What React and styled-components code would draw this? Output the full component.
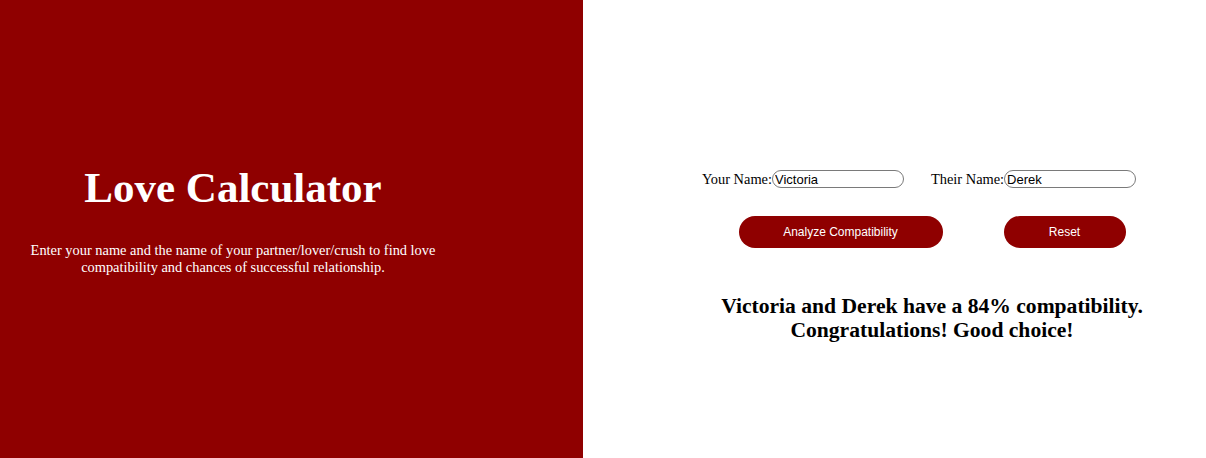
import React from 'react';
import styled, { createGlobalStyle } from 'styled-components';

const GlobalStyle = createGlobalStyle`
  body {
    margin: 0;
    font-family: "Liberation Serif", "Times New Roman", serif;
  }
`;

const App = () => {
    return (
        <>
            <GlobalStyle />
            <Page>
                <Intro>
                    <IntroInner>
                        <Title>Love Calculator</Title>
                        <Lead>
                            Enter your name and the name of your partner/lover/crush to find love
                            compatibility and chances of successful relationship.
                        </Lead>
                    </IntroInner>
                </Intro>
                <Calc>
                    <FormRow>
                        <Field>
                            <label htmlFor="you">Your Name:</label>
                            <NameInput id="you" defaultValue="Victoria" />
                        </Field>
                        <Field>
                            <label htmlFor="them">Their Name:</label>
                            <NameInput id="them" defaultValue="Derek" />
                        </Field>
                    </FormRow>
                    <ButtonRow>
                        <Button $w={204}>Analyze Compatibility</Button>
                        <Button $w={122}>Reset</Button>
                    </ButtonRow>
                    <Result>
                        Victoria and Derek have a 84% compatibility.
                        <br />
                        Congratulations! Good choice!
                    </Result>
                </Calc>
            </Page>
        </>
    );
};

export default App;

const Page = styled.div`
  width: 100%;
  height: 458px;
  display: flex;
`;

const Intro = styled.div`
  width: 583px;
  flex-shrink: 0;
  height: 100%;
  background-color: #8f0000;
  color: white;
  display: flex;
  align-items: center;
`;

const IntroInner = styled.div`
  width: 466px;
  text-align: center;
  margin-top: -20px;
`;

const Title = styled.h1`
  font-size: 43px;
  font-weight: bold;
  margin: 0 0 30px 0;
`;

const Lead = styled.p`
  font-size: 14.4px;
  line-height: 17px;
  margin: 0;
`;

const Calc = styled.div`
  flex: 1;
  display: flex;
  flex-direction: column;
  align-items: center;
  padding-top: 170px;
  padding-left: 75px;
`;

const FormRow = styled.div`
  display: flex;
  gap: 27px;
  margin-left: -26px;
  font-size: 14.4px;
`;

const Field = styled.div`
  display: flex;
  align-items: center;
`;

const NameInput = styled.input`
  width: 132px;
  height: 18px;
  box-sizing: border-box;
  border: 1px solid #7a7a7a;
  border-radius: 9px;
  padding: 0 2px;
  font-family: "Liberation Sans", Arial, sans-serif;
  font-size: 13px;
  color: black;
  outline: none;
`;

const ButtonRow = styled.div`
  display: flex;
  gap: 61px;
  margin-top: 28px;
`;

const Button = styled.button`
  width: ${(p) => p.$w}px;
  height: 32px;
  border: none;
  border-radius: 16px;
  background-color: #8f0000;
  color: white;
  font-family: "Liberation Sans", Arial, sans-serif;
  font-size: 12px;
  cursor: pointer;
`;

const Result = styled.h2`
  font-size: 21.6px;
  line-height: 24px;
  font-weight: bold;
  text-align: center;
  margin: 46px 0 0 0;
`;
